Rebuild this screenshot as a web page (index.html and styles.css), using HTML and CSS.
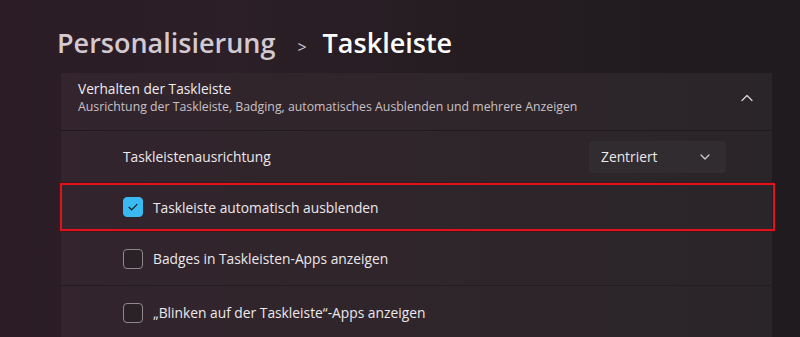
FILE: index.html
```html
<!DOCTYPE html>
<html lang="de">
<head>
<meta charset="utf-8">
<link rel="stylesheet" href="styles.css">
</head>
<body>
<div class="page">
  <h1 class="crumbs"><span class="parent">Personalisierung</span><span class="sep">&gt;</span><span class="current">Taskleiste</span></h1>
  <section class="card">
    <div class="card-head">
      <div class="head-text">
        <div class="head-title">Verhalten der Taskleiste</div>
        <div class="head-sub">Ausrichtung der Taskleiste, Badging, automatisches Ausblenden und mehrere Anzeigen</div>
      </div>
      <svg class="chev-up" width="12" height="8" viewBox="0 0 12 8"><path d="M1 6.5 L6 1.5 L11 6.5" fill="none" stroke="#d9d4d8" stroke-width="1.3" stroke-linecap="round" stroke-linejoin="round"/></svg>
    </div>
    <div class="row row-first">
      <span class="label">Taskleistenausrichtung</span>
      <div class="select"><span>Zentriert</span><svg width="10" height="6" viewBox="0 0 10 6"><path d="M1 1 L5 5 L9 1" fill="none" stroke="#cfcacd" stroke-width="1.3" stroke-linecap="round" stroke-linejoin="round"/></svg></div>
    </div>
    <div class="row row-check highlighted">
      <span class="box checked"><svg width="12" height="10" viewBox="0 0 12 10"><path d="M2 5.3 L4.7 7.8 L10 2.4" fill="none" stroke="#1a1a1a" stroke-width="1.2" stroke-linecap="round" stroke-linejoin="round"/></svg></span>
      <span class="label">Taskleiste automatisch ausblenden</span>
    </div>
    <div class="row row-check">
      <span class="box"></span>
      <span class="label">Badges in Taskleisten-Apps anzeigen</span>
    </div>
    <div class="row row-check">
      <span class="box"></span>
      <span class="label">„Blinken auf der Taskleiste“-Apps anzeigen</span>
    </div>
  </section>
</div>
</body>
</html>
```
FILE: styles.css
```css
html, body {
  margin: 0;
  padding: 0;
  height: 337px;
  overflow: hidden;
}
body {
  background: linear-gradient(90deg, #2b1c25 0%, #2c1f27 30%, #241c21 60%, #1f1b1e 100%);
  font-family: "Open Sans", "Noto Sans", sans-serif;
  color: #e8e4e7;
}
.page {
  padding: 25px 0 0 0;
}
.crumbs {
  margin: 0 0 0 57px;
  font-size: 27px;
  font-weight: 600;
  line-height: 36px;
  display: flex;
  align-items: baseline;
  letter-spacing: 0;
}
.parent {
  color: #d3c9d0;
}
.sep {
  font-size: 16px;
  color: #d3c9d0;
  margin: 0 16px 0 22px;
  font-weight: 400;
}
.current {
  color: #ffffff;
  font-weight: 600;
}
.card {
  margin: 8px 0 0 61px;
  width: 711px;
  background: linear-gradient(90deg, #33242d 0%, #30252b 40%, #2a2529 100%);
}
.card-head {
  height: 58px;
  box-sizing: border-box;
  display: flex;
  align-items: flex-start;
  padding: 6px 19px 0 17px;
  border-bottom: 1px solid #1f1a1d;
}
.head-text {
  flex: 1;
}
.head-title {
  font-size: 13.7px;
  line-height: 19px;
  color: #f0ecef;
}
.head-sub {
  font-size: 12.3px;
  line-height: 18px;
  color: #c9c1c6;
}
.chev-up {
  margin-top: 15px;
}
.row {
  position: relative;
  box-sizing: border-box;
  height: 54px;
  display: flex;
  align-items: center;
  padding: 0 46px 0 62px;
  font-size: 13.8px;
  color: #ece8eb;
  border-bottom: 1px solid #231d21;
}
.row-first {
  height: 52px;
}
.row .label {
  flex: 1;
}
.select {
  width: 137px;
  height: 32px;
  box-sizing: border-box;
  background: #302c2f;
  border-radius: 4px;
  display: flex;
  align-items: center;
  justify-content: space-between;
  padding: 0 16px 0 12px;
  font-size: 13.8px;
  color: #ece8eb;
}
.row-check {
  gap: 10px;
}
.row-check .label {
  flex: none;
}
.box {
  width: 20px;
  height: 20px;
  box-sizing: border-box;
  border: 1.5px solid #8f878c;
  border-radius: 4px;
  background: #2b2227;
  display: flex;
  align-items: center;
  justify-content: center;
}
.box.checked {
  background: #39baf2;
  border-color: #39baf2;
}
.highlighted {
  height: 49px;
}
.highlighted::after {
  content: "";
  position: absolute;
  left: -1px;
  right: -3px;
  top: 0;
  bottom: 0;
  border: 2px solid #e3111c;
  box-shadow: 0 0 1px #a00;
}
```
